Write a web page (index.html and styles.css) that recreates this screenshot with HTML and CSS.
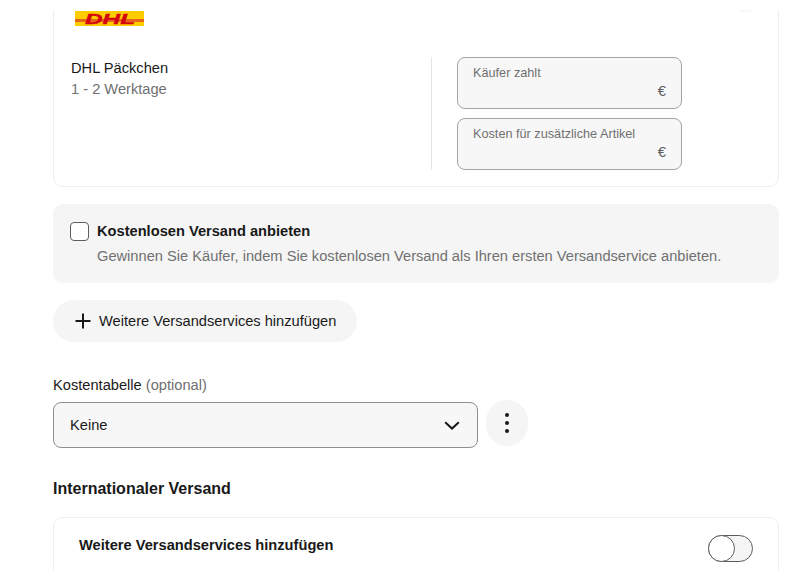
FILE: index.html
```html
<!DOCTYPE html>
<html lang="de">
<head>
  <meta charset="UTF-8">
  <meta name="viewport" content="width=device-width, initial-scale=1.0">
  <title>Versand</title>
  <link rel="stylesheet" href="styles.css">
</head>
<body>
  <div class="viewport">
    <div class="card service-card">
      <span class="close-peek"></span>
      <svg class="dhl-logo" width="69" height="15" viewBox="0 0 69 15">
        <rect width="69" height="15" fill="#ffcc00"/>
        <rect y="8" width="69" height="3" fill="#e8641b"/>
        <text class="dhl-text" x="10" y="13" textLength="50" lengthAdjust="spacingAndGlyphs">DHL</text>
      </svg>
      <div class="service-row">
        <div class="service-info">
          <div class="service-name">DHL Päckchen</div>
          <div class="service-time">1 - 2 Werktage</div>
        </div>
        <div class="service-prices">
          <div class="price-field">
            <div class="price-label">Käufer zahlt</div>
            <div class="price-unit">€</div>
          </div>
          <div class="price-field">
            <div class="price-label">Kosten für zusätzliche Artikel</div>
            <div class="price-unit">€</div>
          </div>
        </div>
      </div>
    </div>

    <div class="free-panel">
      <div class="free-title"><span class="checkbox"></span>Kostenlosen Versand anbieten</div>
      <div class="free-text">Gewinnen Sie Käufer, indem Sie kostenlosen Versand als Ihren ersten Versandservice anbieten.</div>
    </div>

    <button class="add-btn">
      <svg width="16" height="16" viewBox="0 0 16 16"><path d="M8 .5v15M.5 8h15" stroke="#191919" stroke-width="2" fill="none"/></svg>
      Weitere Versandservices hinzufügen
    </button>

    <div class="table-label">Kostentabelle <span class="optional">(optional)</span></div>
    <div class="table-row">
      <div class="select">
        <span>Keine</span>
        <svg width="16" height="9" viewBox="0 0 16 9"><path d="M1.2 1.2L8 7.6l6.8-6.4" stroke="#191919" stroke-width="2" fill="none"/></svg>
      </div>
      <button class="more-btn">
        <svg width="4" height="20" viewBox="0 0 4 20"><circle cx="2" cy="2" r="2"/><circle cx="2" cy="10" r="2"/><circle cx="2" cy="18" r="2"/></svg>
      </button>
    </div>

    <h2 class="section-title">Internationaler Versand</h2>

    <div class="card intl-card">
      <div class="intl-title">Weitere Versandservices hinzufügen</div>
      <span class="toggle"><span class="toggle-knob"></span></span>
    </div>
  </div>
</body>
</html>
```

FILE: styles.css
```css
body {
  margin: 0;
  background-color: #fff;
  font-family: "Liberation Sans", Arial, sans-serif;
  color: #191919;
  font-size: 14.65px;
}
.viewport {
  margin-top: 10px;
  height: 560px;
  overflow: hidden;
  padding: 0 21px 0 53px;
}
.card {
  border: 1px solid #eeeeee;
  border-radius: 10px;
  background-color: #fff;
}
.service-card {
  position: relative;
  border-top: 0;
  border-top-left-radius: 0;
  border-top-right-radius: 0;
  height: 175px;
  padding: 1px 25px 0 17px;
}
.close-peek {
  position: absolute;
  top: -30px;
  right: 17px;
  width: 32px;
  height: 32px;
  border-radius: 50%;
  background-color: #f7f7f7;
}
.dhl-logo {
  display: block;
  margin-left: 4px;
}
.dhl-text {
  fill: #d40511;
  stroke: #d40511;
  stroke-width: 0.4px;
  font-size: 15px;
  font-weight: bold;
  font-style: italic;
}
.service-row {
  display: flex;
  margin-top: 31px;
}
.service-info {
  width: 360px;
  padding-top: 1px;
  border-right: 1px solid #e5e5e5;
  line-height: 21px;
}
.service-time {
  color: #707070;
}
.service-prices {
  display: flex;
  flex-direction: column;
  gap: 9px;
  margin-left: 25px;
  width: 225px;
}
.price-field {
  box-sizing: border-box;
  height: 52px;
  padding: 8px 15px 0;
  border: 1px solid #a3a3a3;
  border-radius: 8px;
  background-color: #f7f7f7;
}
.price-label {
  font-size: 12.7px;
  line-height: 14px;
  color: #707070;
}
.price-unit {
  margin-top: 2px;
  font-size: 15px;
  line-height: 18px;
  text-align: right;
  color: #5c5c5c;
}
.free-panel {
  box-sizing: border-box;
  height: 79px;
  margin-top: 17px;
  padding: 16px 17px;
  border-radius: 10px;
  background-color: #f5f5f5;
}
.free-title {
  display: flex;
  align-items: center;
  line-height: 22px;
  font-weight: bold;
}
.checkbox {
  box-sizing: border-box;
  width: 19px;
  height: 19px;
  margin-right: 8px;
  border: 1.5px solid #5c5c5c;
  border-radius: 4px;
  background-color: #fff;
}
.free-text {
  margin-top: 4px;
  margin-left: 27px;
  line-height: 21px;
  color: #707070;
}
.add-btn {
  display: flex;
  align-items: center;
  gap: 8px;
  height: 42px;
  margin-top: 17px;
  padding: 0 21px 0 22px;
  border: 0;
  border-radius: 21px;
  background-color: #f5f5f5;
  color: #191919;
  font-family: inherit;
  font-size: 14.65px;
}
.table-label {
  margin-top: 34px;
  line-height: 18px;
}
.optional {
  color: #707070;
}
.table-row {
  display: flex;
  align-items: flex-start;
  gap: 8px;
  margin-top: 6px;
}
.select {
  box-sizing: border-box;
  display: flex;
  align-items: center;
  justify-content: space-between;
  width: 425px;
  height: 46px;
  margin-top: 2px;
  padding: 0 17px 0 16px;
  border: 1px solid #8f8f8f;
  border-radius: 8px;
  background-color: #f7f7f7;
}
.more-btn {
  display: flex;
  align-items: center;
  justify-content: center;
  width: 42px;
  height: 46px;
  padding: 0;
  border: 0;
  border-radius: 21px;
  background-color: #f5f5f5;
}
.more-btn svg {
  fill: #191919;
}
.section-title {
  margin: 31px 0 0;
  font-size: 16px;
  line-height: 20px;
  font-weight: bold;
}
.intl-card {
  display: flex;
  align-items: flex-start;
  justify-content: space-between;
  box-sizing: border-box;
  height: 80px;
  margin-top: 18px;
  padding: 17px 25px 0;
}
.intl-title {
  line-height: 20px;
  font-weight: bold;
}
.toggle {
  position: relative;
  box-sizing: border-box;
  width: 45px;
  height: 27px;
  border: 1px solid #5c5c5c;
  border-radius: 14px;
  background-color: #f5f5f5;
}
.toggle-knob {
  position: absolute;
  left: -1px;
  top: -1px;
  box-sizing: border-box;
  width: 27px;
  height: 27px;
  border: 1px solid #5c5c5c;
  border-radius: 50%;
  background-color: #fff;
}
```
